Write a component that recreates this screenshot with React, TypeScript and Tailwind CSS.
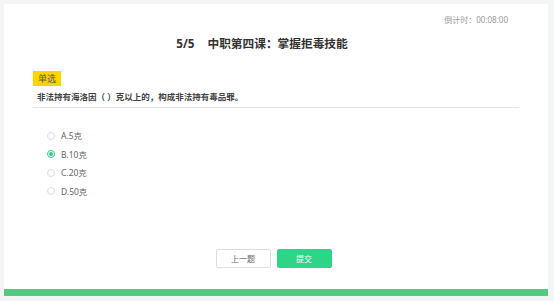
import React from 'react';

const options = ['A.5克', 'B.10克', 'C.20克', 'D.50克'];

export default function App() {
  const selected = 1;

  return (
    <div
      className="w-[554px] h-[301px] bg-[#f4f5f7] p-[4px] pr-[6px]"
      style={{ fontFamily: '"Noto Sans", "Noto Sans CJK SC", sans-serif' }}
    >
      <div className="h-[292px] bg-white flex flex-col">
        <div className="flex justify-end pr-[40px] pt-[11px] text-[8px] leading-[10px] text-[#999]">
          倒计时：00:08:00
        </div>
        <h1 className="mt-[10px] pr-[28px] text-center text-[11.7px] leading-[16px] font-bold text-[#333]">
          5/5<span className="inline-block w-[13px]" />中职第四课：掌握拒毒技能
        </h1>
        <div className="mx-[29px] mt-[13px] border-b border-[#e5e5e5] pb-[4px]">
          <span className="inline-block bg-[#ffd300] px-[5px] text-[9px] leading-[15px] text-[#555]">单选</span>
          <p className="mt-[3px] pl-[4px] text-[8.5px] leading-[12px] font-bold text-[#444]">
            非法持有海洛因（ ）克以上的，构成非法持有毒品罪。
          </p>
        </div>
        <div className="mt-[22px] ml-[43px] flex flex-col gap-[7.5px]">
          {options.map((o, i) => (
            <label key={o} className="flex items-center gap-[6px] text-[8.5px] leading-[11px] text-[#666]">
              {i === selected ? (
                <span className="w-[8px] h-[8px] rounded-full border border-[#2ecc87] flex items-center justify-center">
                  <span className="w-[4px] h-[4px] rounded-full bg-[#2ecc87]" />
                </span>
              ) : (
                <span className="w-[8px] h-[8px] rounded-full border border-[#ddd]" />
              )}
              {o}
            </label>
          ))}
        </div>
        <div className="mt-auto mb-[21px] flex justify-center gap-[6px] pr-[5px]">
          <button className="w-[55px] h-[19px] border border-[#ddd] rounded-[2px] bg-white text-[8px] text-[#666]">
            上一题
          </button>
          <button className="w-[55px] h-[19px] rounded-[2px] bg-[#2ed589] text-[8px] text-white">
            提交
          </button>
        </div>
        <div className="h-[7px] bg-[#55c97f]" />
      </div>
    </div>
  );
}
